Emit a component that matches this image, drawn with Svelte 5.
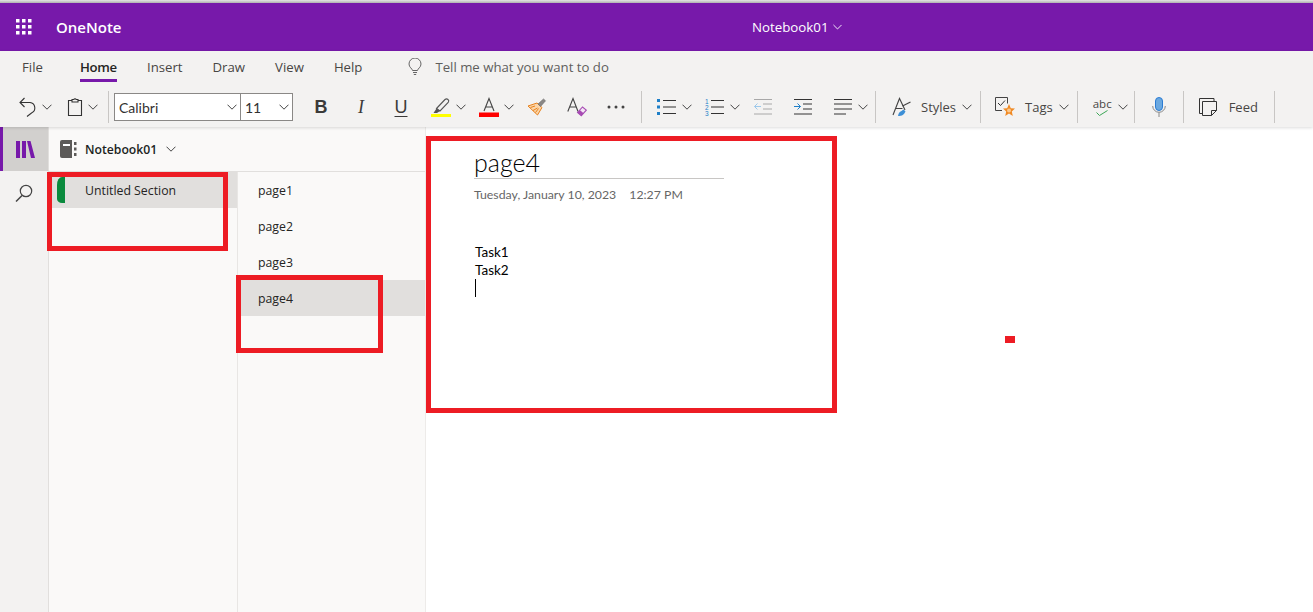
<script>
  const tabs = ["File", "Home", "Insert", "Draw", "View", "Help"];
  const pages = ["page1", "page2", "page3", "page4"];
  const activePage = "page4";
</script>

{#snippet chevron()}
  <svg class="chev" viewBox="0 0 10 6" width="10" height="6"><path d="M.5.7 5 5.2 9.5.7" fill="none" stroke="#444" stroke-width="1" /></svg>
{/snippet}

<div class="shell">
  <header class="titlebar">
    <svg class="waffle" viewBox="0 0 16 16" width="16" height="16" fill="#fff">
      {#each [0, 6, 12] as y}
        {#each [0, 6, 12] as x}
          <rect x={x} y={y} width="3.500" height="3.500" />
        {/each}
      {/each}
    </svg>
    <span class="brand">OneNote</span>
    <span class="nb-title">Notebook01
      <svg viewBox="0 0 10 6" width="9" height="6"><path d="M.5.7 5 5.2 9.5.7" fill="none" stroke="#fff" stroke-width="1" /></svg>
    </span>
  </header>

  <section class="ribbon">
    <nav class="tabs">
      {#each tabs as tab}
        <span class="tab" class:active={tab === "Home"}>{tab}</span>
      {/each}
      <span class="tell">
        <svg viewBox="0 0 14 18" width="14" height="18" fill="none" stroke="#666" stroke-width="1"><path d="M4.500 12.500C4.300 10.500 1 9.500 1 6a6 6 0 0 1 12 0c0 3.500-3.300 4.500-3.500 6.500z" /><path d="M5 14.500h4M5.800 16.500h2.400" /></svg>
        Tell me what you want to do
      </span>
    </nav>

    <div class="toolbar">
      <span class="btn split">
        <svg viewBox="0 0 18 20" width="18" height="20" fill="none" stroke="#333" stroke-width="1.100"><path d="M1 5.500h10a5.500 5.500 0 0 1 1.500 10.500L8 19.500M5.500 1 1 5.500 5.500 10" /></svg>
        {@render chevron()}
      </span>
      <span class="btn split">
        <svg viewBox="0 0 16 20" width="16" height="20" fill="none" stroke="#333" stroke-width="1.100"><path d="M5 3.500H1.500v15h13v-15H11M5 5V2.500h1.800a1.300 1.300 0 0 1 2.400 0H11V5z" /></svg>
        {@render chevron()}
      </span>
      <span class="sep first"></span>
      <span class="fontbox">
        <span class="fontname">Calibri {@render chevron()}</span>
        <span class="fontsize">11 {@render chevron()}</span>
      </span>

      <span class="btn glyph bold">B</span>
      <span class="btn glyph italic">I</span>
      <span class="btn glyph under">U</span>

      <span class="btn split">
        <svg viewBox="0 0 20 20" width="20" height="20"><path d="M5.500 11.500 14 2.500q1.500-1.300 3 0t.2 3L9 14z" fill="none" stroke="#555" stroke-width="1.100" /><path d="M5.500 11.500 9 14 6 16H2.500z" fill="#555" /><rect y="17" width="20" height="3" fill="#ff0" /></svg>
        {@render chevron()}
      </span>
      <span class="btn split">
        <svg viewBox="0 0 20 20" width="20" height="20"><path d="M5 14 10 1.500 15 14M6.800 10h6.400" fill="none" stroke="#444" stroke-width="1.100" /><rect y="15.500" width="20" height="4.500" fill="#f00" /></svg>
        {@render chevron()}
      </span>
      <span class="btn">
        <svg viewBox="0 0 20 20" width="20" height="20"><path d="M1 9 10 6l5 4.500-4.500 7.500z" fill="#fbd5a8" stroke="#e8821e" /><path d="M6 13.500l4.500-2.500M8.500 15.500l3-4M3.500 10.500 8 9" stroke="#e8821e" fill="none" /><path d="M11 7 16.500 2l2 1.800-5 5.700z" fill="#8a8886" stroke="#666" stroke-width=".6" /></svg>
      </span>
      <span class="btn">
        <svg viewBox="0 0 20 20" width="20" height="20" fill="none"><path d="M.8 14.500 6 1.500l5 13M2.800 10h6.300" stroke="#444" stroke-width="1.100" /><path d="M10.500 15.500 15.500 10l3.800 3.200-5 5.500z" stroke="#a74bb3" stroke-width="1.100" fill="#f3e4f5" /><path d="M10.500 15.500 12.800 13l3.800 3.200-2.300 2.500z" fill="#a74bb3" /></svg>
      </span>
      <span class="btn">
        <svg viewBox="0 0 18 4" width="18" height="4" fill="#444"><circle cx="2" cy="2" r="1.500" /><circle cx="9" cy="2" r="1.500" /><circle cx="16" cy="2" r="1.500" /></svg>
      </span>
      <span class="sep"></span>

      <span class="btn split">
        <svg viewBox="0 0 20 18" width="20" height="18"><path d="M6 2.500h13M6 9h13M6 15.500h13" stroke="#333" /><path d="M0 1h3v3H0zM0 7.500h3v3H0zM0 14h3v3H0z" fill="#1e7fc8" /></svg>
        {@render chevron()}
      </span>
      <span class="btn split">
        <svg viewBox="0 0 20 18" width="20" height="18"><path d="M6 2.500h13M6 9h13M6 15.500h13" stroke="#333" /><text x="0" y="5.500" class="num">1</text><text x="0" y="12" class="num">2</text><text x="0" y="18" class="num">3</text></svg>
        {@render chevron()}
      </span>
      <span class="btn">
        <svg viewBox="0 0 20 18" width="20" height="18" fill="none"><path d="M1 1.500h18M10 6h9M10 11h9M1 16h18" stroke="#a8a8a8" /><path d="M8 8.500H1.500M4.500 5.500l-3 3 3 3" stroke="#9cc8ea" /></svg>
      </span>
      <span class="btn">
        <svg viewBox="0 0 20 18" width="20" height="18" fill="none"><path d="M1 1.500h18M10 6h9M10 11h9M1 16h18" stroke="#333" /><path d="M1 8.500h6.500M4.500 5.500l3 3-3 3" stroke="#1e7fc8" /></svg>
      </span>
      <span class="btn split">
        <svg viewBox="0 0 20 18" width="20" height="18" fill="none" stroke="#333"><path d="M1 1.500h18M1 6h18M1 11h18M1 16h12" /></svg>
        {@render chevron()}
      </span>
      <span class="sep"></span>

      <span class="labeled styles">
        <svg viewBox="0 0 20 20" width="20" height="20" fill="none"><path d="M1 18 7.500 1.500 13 13M3.500 11.500h7" stroke="#444" stroke-width="1.100" /><path d="M10.500 9 18.500 5" stroke="#444" stroke-width="1.100" /><path d="M6 19q.5-4 3.500-5l2-1.500 2 2-1.500 2.500q-2 2.500-6 2z" fill="#3d8fd6" /></svg>
        <span class="lbl">Styles</span>
        {@render chevron()}
      </span>
      <span class="sep"></span>

      <span class="labeled tags">
        <svg viewBox="0 0 20 20" width="20" height="20"><path d="M7 13.500H.5V.5h12v6" fill="none" stroke="#444" /><path d="M3 6 5.500 8.500 10 3.500" fill="none" stroke="#333" /><path d="m14 7 1.800 4.200 4.200.4-3.200 2.900 1 4.500-3.800-2.400-3.800 2.400 1-4.500L8 11.600l4.200-.4z" fill="#f08a24" /><circle cx="14" cy="13.500" r="2" fill="#fbc98e" /></svg>
        <span class="lbl">Tags</span>
        {@render chevron()}
      </span>
      <span class="sep"></span>

      <span class="labeled spell">
        <span class="abc">abc<svg viewBox="0 0 12 6" width="12" height="6"><path d="M.5 2.500 3.500 5.500 11.500.5" fill="none" stroke="#3aa655" /></svg></span>
        {@render chevron()}
      </span>
      <span class="sep"></span>

      <span class="mic">
        <svg viewBox="0 0 14 20" width="14" height="20" fill="none"><rect x="3.500" y=".5" width="7" height="13" rx="3.500" fill="#6aa8e0" stroke="#2b7cd3" /><path d="M.7 9a6.300 6.300 0 0 0 12.600 0M7 15.500V20" stroke="#888" /></svg>
      </span>
      <span class="sep"></span>

      <span class="labeled feed">
        <svg viewBox="0 0 18 18" width="18" height="18" fill="none" stroke="#333"><path d="M3.500 3.500h14v9l-5 5h-9z" /><path d="M12.500 17.500v-5h5" /><path d="M3 15.500H.5V.5H15v2.500" /></svg>
        <span class="lbl">Feed</span>
      </span>
      <span class="sep"></span>
    </div>
  </section>

  <main class="body">
    <aside class="rail">
      <span class="rail-item active">
        <svg viewBox="0 0 19 17" width="19" height="17" fill="#7719aa"><path d="M0 0h4v17H0zM6 0h4v17H6zM11 0h3.500L19 17h-4z" /></svg>
      </span>
      <span class="rail-item">
        <svg viewBox="0 0 18 18" width="18" height="18" fill="none" stroke="#444" stroke-width="1.200"><circle cx="11" cy="7" r="5.700" /><path d="m7 11.500-6 6" stroke-width="1.500" /></svg>
      </span>
    </aside>

    <div class="nav">
      <div class="nb-head">
        <svg viewBox="0 0 17 18" width="17" height="18"><path d="M0 2q0-2 2-2h10v18H2q-2 0-2-2z" fill="#5c5a58" /><rect x="3" y="4" width="7" height="2" fill="#fff" /><path d="M14 2h2.500v3H14zM14 7.500h2.500v3H14zM14 13h2.500v3H14z" fill="#5c5a58" /></svg>
        <b>Notebook01</b>
        {@render chevron()}
      </div>
      <div class="lists">
        <div class="sections">
          <div class="row section-row">
            <span class="marker"></span>
            <span>Untitled Section</span>
          </div>
        </div>
        <div class="pages">
          {#each pages as page}
            <div class="row page-row" class:selected={page === activePage}>{page}</div>
          {/each}
        </div>
      </div>
    </div>

    <article class="canvas">
      <h1>page4</h1>
      <p class="stamp"><span>Tuesday, January 10, 2023</span><span>12:27 PM</span></p>
      <div class="note">
        <div>Task1</div>
        <div>Task2</div>
        <i class="caret"></i>
      </div>
    </article>
  </main>

  <span class="mark m1"></span>
  <span class="mark m2"></span>
  <span class="mark m3"></span>
  <span class="dot"></span>
</div>

<style>
  :global(body) {
    margin: 0;
    background: #fff;
  }

  .shell {
    position: relative;
    width: 1313px;
    height: 612px;
    overflow: hidden;
    font-family: "Open Sans", "Noto Sans", sans-serif;
    color: #323130;
    display: flex;
    flex-direction: column;
  }

  .shell::before {
    content: "";
    height: 3px;
    flex: none;
    background: linear-gradient(#e4e4e4, #b0b0b0);
  }

  .titlebar {
    height: 48px;
    flex: none;
    background: #7719aa;
    color: #fff;
    display: flex;
    align-items: center;
    padding-left: 16px;
    position: relative;
  }

  .brand {
    margin-left: 24px;
    font-size: 15px;
    font-weight: 600;
  }

  .nb-title {
    position: absolute;
    left: 752px;
    font-size: 13.300px;
    display: flex;
    align-items: center;
    gap: 4px;
  }

  .ribbon {
    height: 76px;
    flex: none;
    background: #f3f2f1;
    box-shadow: 0 1px 3px rgba(0, 0, 0, 0.14);
    position: relative;
    z-index: 1;
  }

  .tabs {
    height: 32px;
    display: flex;
    align-items: center;
    gap: 30px;
    padding-left: 22px;
    font-size: 13.200px;
    color: #484644;
  }

  .tab {
    position: relative;
    line-height: 18px;
  }

  .tab:first-child {
    margin-right: 7px;
  }

  .tab.active {
    font-weight: 600;
    color: #252423;
    letter-spacing: -0.02em;
  }

  .tab.active::after {
    content: "";
    position: absolute;
    left: 0;
    right: 0;
    bottom: -6px;
    height: 3px;
    background: #7719aa;
  }

  .tell {
    margin-left: 16px;
    display: flex;
    align-items: center;
    gap: 13px;
    color: #605e5c;
  }

  .toolbar {
    height: 40px;
    margin-top: 4px;
    display: flex;
    align-items: center;
    padding-left: 9px;
  }

  .btn {
    width: 40px;
    height: 28px;
    flex: none;
    box-sizing: border-box;
    padding-left: 10px;
    display: flex;
    align-items: center;
    gap: 5px;
  }

  .btn.split {
    width: 48px;
  }

  .chev {
    flex: none;
  }

  .sep {
    width: 1px;
    height: 32px;
    flex: none;
    background: #c8c6c4;
    margin: 0 5px 0 4px;
  }

  .sep.first {
    margin: 0 5px 0 3px;
  }

  .fontbox {
    width: 179px;
    height: 28px;
    flex: none;
    box-sizing: border-box;
    border: 1px solid #8a8886;
    background: #fff;
    display: flex;
    font-family: Lato, "Liberation Sans", sans-serif;
    font-size: 14px;
    margin-right: 8px;
  }

  .fontname,
  .fontsize {
    display: flex;
    align-items: center;
    justify-content: space-between;
    padding: 0 3px 0 4px;
    box-sizing: border-box;
  }

  .fontname {
    width: 126px;
    border-right: 1px solid #8a8886;
  }

  .fontsize {
    flex: 1;
  }

  .glyph {
    justify-content: center;
    padding: 0;
    color: #3b3a39;
    font-size: 18px;
    font-family: "Liberation Sans", sans-serif;
  }

  .bold {
    font-weight: 700;
  }

  .italic {
    font-family: "Liberation Serif", serif;
    font-style: italic;
  }

  .under {
    text-decoration: underline;
    text-underline-offset: 3px;
    text-decoration-thickness: 1px;
  }

  .num {
    font-size: 6.500px;
    font-family: "Liberation Sans", sans-serif;
    fill: #1e7fc8;
  }

  .labeled {
    display: flex;
    align-items: center;
    flex: none;
    font-size: 13px;
    color: #484644;
  }

  .lbl {
    margin-left: 10px;
  }

  .labeled .chev {
    margin-left: 6px;
  }

  .styles {
    padding-left: 11px;
    padding-right: 4px;
  }

  .styles .lbl {
    margin-left: 9px;
  }

  .tags {
    padding-left: 9px;
    padding-right: 4px;
  }

  .spell {
    padding-left: 10px;
    padding-right: 2px;
  }

  .abc {
    display: flex;
    flex-direction: column;
    align-items: center;
    font-size: 11.500px;
    line-height: 12px;
    color: #484644;
  }

  .spell .chev {
    margin-left: 6px;
  }

  .mic {
    padding: 0 13px 0 12px;
    display: flex;
  }

  .feed {
    padding-left: 10px;
    padding-right: 12px;
  }

  .feed .lbl {
    margin-left: 12px;
  }

  .body {
    flex: 1;
    display: flex;
    min-height: 0;
  }

  .rail {
    width: 48px;
    flex: none;
    background: #f3f2f1;
    border-right: 1px solid #e1dfdd;
  }

  .rail-item {
    height: 44px;
    display: flex;
    align-items: center;
    justify-content: center;
    box-sizing: border-box;
  }

  .rail-item.active {
    background: #d2d0ce;
    border-left: 3px solid #7719aa;
  }

  .nav {
    width: 376px;
    flex: none;
    background: #faf9f8;
    border-right: 1px solid #edebe9;
    display: flex;
    flex-direction: column;
  }

  .nb-head {
    height: 45px;
    flex: none;
    box-sizing: border-box;
    border-bottom: 1px solid #e1dfdd;
    display: flex;
    align-items: center;
    padding-left: 11px;
    font-size: 12.200px;
  }

  .nb-head b {
    margin-left: 8px;
    margin-right: 9px;
    font-weight: 600;
    color: #201f1e;
  }

  .lists {
    flex: 1;
    display: flex;
  }

  .sections {
    width: 189px;
    flex: none;
    box-sizing: border-box;
    border-right: 1px solid #e8e6e4;
  }

  .pages {
    flex: 1;
  }

  .row {
    height: 36px;
    display: flex;
    align-items: center;
    font-size: 12.300px;
    color: #252423;
    box-sizing: border-box;
  }

  .section-row {
    background: #e1dfdd;
    padding-left: 8px;
    gap: 20px;
    position: relative;
  }

  .marker {
    width: 8px;
    height: 26px;
    background: #0a8a3d;
    border-radius: 5px 0 0 5px / 8px 0 0 4px;
  }

  .page-row {
    padding-left: 20px;
  }

  .page-row.selected {
    background: #e1dfdd;
  }

  .canvas {
    flex: 1;
    background: #fff;
    padding-left: 48px;
    font-family: Lato, "Liberation Sans", sans-serif;
  }

  h1 {
    margin: 17px 0 0;
    width: 250px;
    height: 35px;
    box-sizing: border-box;
    border-bottom: 1px solid #c8c6c4;
    font-weight: 300;
    font-size: 25px;
    line-height: 36px;
    color: #000;
  }

  .stamp {
    margin: 8px 0 0;
    font-size: 12.300px;
    line-height: 16px;
    color: #666;
    display: flex;
    gap: 13px;
  }

  .note {
    margin-top: 40px;
    margin-left: 1px;
    font-size: 13.500px;
    line-height: 18px;
    color: #000;
  }

  .caret {
    display: block;
    width: 1px;
    height: 18px;
    background: #000;
  }

  .mark {
    position: absolute;
    box-sizing: border-box;
    border: 5px solid #ed1c24;
  }

  .m1 {
    left: 47px;
    top: 172px;
    width: 181px;
    height: 79px;
  }

  .m2 {
    left: 236px;
    top: 275px;
    width: 147px;
    height: 78px;
  }

  .m3 {
    left: 426px;
    top: 136px;
    width: 411px;
    height: 277px;
  }

  .dot {
    position: absolute;
    left: 1005px;
    top: 336px;
    width: 10px;
    height: 7px;
    background: #ed1c24;
  }
</style>
